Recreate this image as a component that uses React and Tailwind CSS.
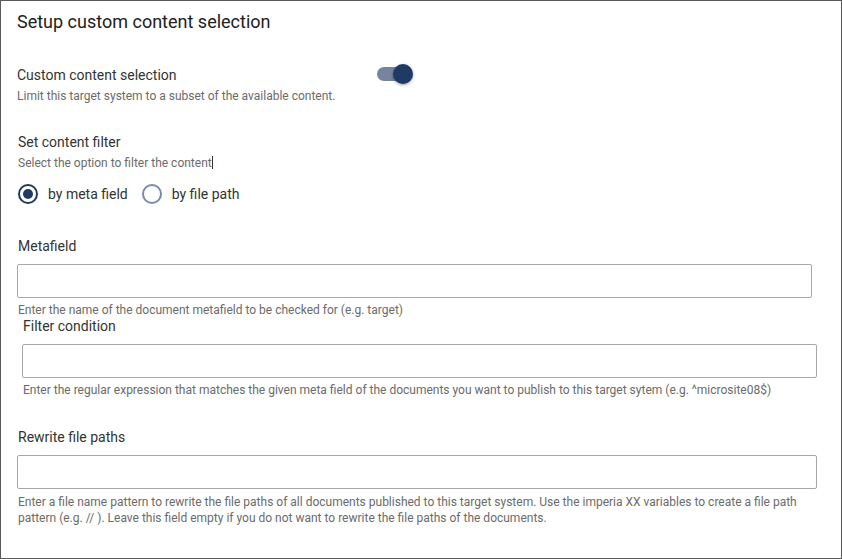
import { useState } from "react";

const Radio = ({ checked, label, onClick }) => (
	<label className="flex items-center gap-[10px] cursor-pointer" onClick={onClick}>
		<span
			className={`w-[20px] h-[20px] rounded-full border-2 flex items-center justify-center ${
				checked ? "border-[#1f3a64]" : "border-[#7a8aa6]"
			}`}
		>
			{checked && <span className="w-[10px] h-[10px] rounded-full bg-[#1f3a64]"></span>}
		</span>
		<span className="text-[14px] leading-[20px] text-[#333]">{label}</span>
	</label>
);

const App = () => {
	const [enabled, setEnabled] = useState(true);
	const [filter, setFilter] = useState("meta");

	return (
		<div className="w-[842px] h-[559px] box-border border border-[#595959] bg-white font-['Roboto','Liberation_Sans',sans-serif] overflow-hidden">
			<div className="pl-[16px] pt-[9px]">
				<h2 className="text-[18px] leading-[24px] text-[#212121]">Setup custom content selection</h2>

				{/* Custom content selection */}
				<div className="mt-[31px] flex justify-between items-start w-[396px]">
					<div>
						<p className="text-[14px] leading-[20px] text-[#333]">Custom content selection</p>
						<p className="mt-[3px] text-[12px] leading-[16px] text-[#6b6b6b]">
							Limit this target system to a subset of the available content.
						</p>
					</div>
					<button
						type="button"
						onClick={() => setEnabled(!enabled)}
						className="relative mt-[-1px] w-[36px] h-[20px] flex items-center"
					>
						<span className="w-[34px] h-[14px] rounded-full bg-[#75859f]"></span>
						<span
							className={`absolute top-0 w-[20px] h-[20px] rounded-full bg-[#1f3a64] shadow-[0_1px_3px_rgba(0,0,0,0.4)] ${
								enabled ? "left-[16px]" : "left-0"
							}`}
						></span>
					</button>
				</div>

				{/* Content filter */}
				<p className="mt-[28px] pl-px text-[14px] leading-[20px] text-[#333]">Set content filter</p>
				<p className="mt-[3px] pl-px text-[12px] leading-[16px] text-[#6b6b6b]">
					Select the option to filter the content
					<span className="inline-block w-px h-[13px] bg-[#333] align-[-2px]"></span>
				</p>
				<div className="mt-[13px] flex items-center gap-[14px] pl-px">
					<Radio checked={filter === "meta"} label="by meta field" onClick={() => setFilter("meta")} />
					<Radio checked={filter === "path"} label="by file path" onClick={() => setFilter("path")} />
				</div>

				{/* Metafield */}
				<p className="mt-[32px] pl-px text-[14px] leading-[20px] text-[#333]">Metafield</p>
				<input
					type="text"
					className="mt-[8px] block w-[795px] h-[34px] border border-[#a8a8a8] rounded-[2px] outline-none px-2 text-[14px]"
				/>
				<p className="mt-[5px] pl-px text-[12px] leading-[14px] text-[#6b6b6b]">
					Enter the name of the document metafield to be checked for (e.g. target)
				</p>

				{/* Filter condition */}
				<div className="pl-[5px]">
					<p className="pl-px text-[14px] leading-[18px] text-[#333]">Filter condition</p>
					<input
						type="text"
						className="mt-[9px] block w-[795px] h-[34px] border border-[#a8a8a8] rounded-[2px] outline-none px-2 text-[14px]"
					/>
					<p className="mt-[4px] pl-px text-[12px] leading-[16px] text-[#6b6b6b]">
						Enter the regular expression that matches the given meta field of the documents you want to publish to this target sytem (e.g. ^microsite08$)
					</p>
				</div>

				{/* Rewrite file paths */}
				<p className="mt-[29px] pl-px text-[14px] leading-[20px] text-[#333]">Rewrite file paths</p>
				<input
					type="text"
					className="mt-[8px] block w-[800px] h-[34px] border border-[#a8a8a8] rounded-[2px] outline-none px-2 text-[14px]"
				/>
				<p className="mt-[5px] pl-px w-[800px] text-[12px] leading-[16px] text-[#6b6b6b]">
					Enter a file name pattern to rewrite the file paths of all documents published to this target system. Use the imperia XX variables to create a file path pattern (e.g. // ). Leave this field empty if you do not want to rewrite the file paths of the documents.
				</p>
			</div>
		</div>
	);
};

export default App;
